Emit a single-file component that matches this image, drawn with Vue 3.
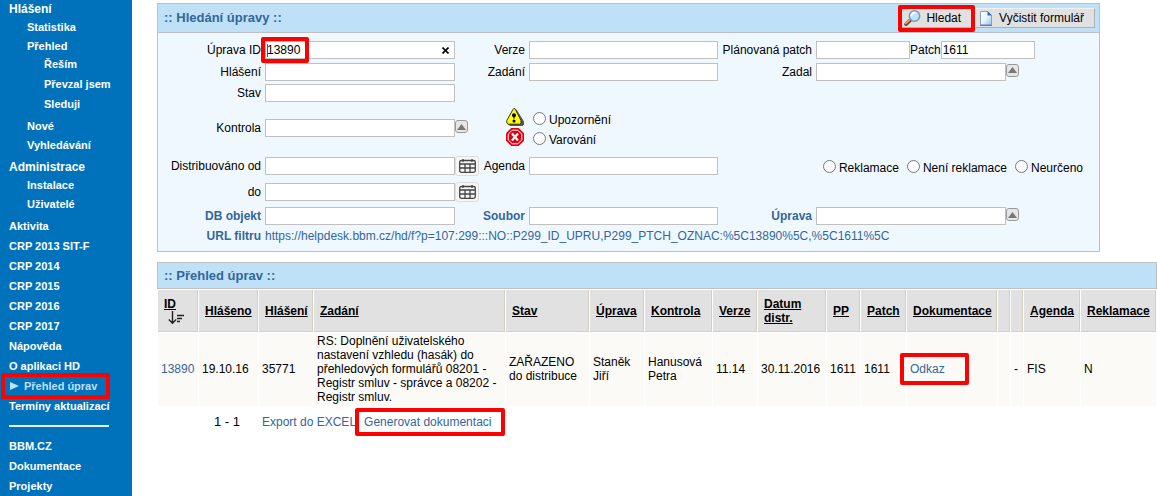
<script setup>
import { ref } from 'vue'

const menu = [
  {
    label: 'Hlášení',
    items: [
      { label: 'Statistika' },
      { label: 'Přehled', items: ['Řeším', 'Převzal jsem', 'Sleduji'] },
      { label: 'Nové' },
      { label: 'Vyhledávání' },
    ],
  },
  { label: 'Administrace', items: [{ label: 'Instalace' }, { label: 'Uživatelé' }] },
]
const pages = ['Aktivita', 'CRP 2013 SIT-F', 'CRP 2014', 'CRP 2015', 'CRP 2016', 'CRP 2017', 'Nápověda', 'O aplikaci HD', 'Přehled úprav', 'Termíny aktualizací']
const current = 'Přehled úprav'
const external = ['BBM.CZ', 'Dokumentace', 'Projekty']

const upravaId = ref('13890')
const patch = ref('1611')
const kontrola = ref('')
const reklamace = ref('')

const columns = [
  { key: 'id', label: 'ID' },
  { key: 'hlaseno', label: 'Hlášeno' },
  { key: 'hlaseni', label: 'Hlášení' },
  { key: 'zadani', label: 'Zadání' },
  { key: 'stav', label: 'Stav' },
  { key: 'uprava', label: 'Úprava' },
  { key: 'kontrola', label: 'Kontrola' },
  { key: 'verze', label: 'Verze' },
  { key: 'datum', label: 'Datum distr.' },
  { key: 'pp', label: 'PP' },
  { key: 'patch', label: 'Patch' },
  { key: 'dokumentace', label: 'Dokumentace' },
  { key: 'e1', label: '' },
  { key: 'e2', label: '' },
  { key: 'agenda', label: 'Agenda' },
  { key: 'reklamace', label: 'Reklamace' },
]
const rows = [
  {
    id: '13890', hlaseno: '19.10.16', hlaseni: '35771',
    zadani: 'RS: Doplnění uživatelského nastavení vzhledu (hasák) do přehledových formulářů 08201 - Registr smluv - správce a 08202 - Registr smluv.',
    stav: 'ZAŘAZENO do distribuce', uprava: 'Staněk Jiří', kontrola: 'Hanusová Petra', verze: '11.14',
    datum: '30.11.2016', pp: '1611', patch: '1611', dokumentace: 'Odkaz', e1: '', e2: '-', agenda: 'FIS', reklamace: 'N',
  },
]
</script>

<template>
  <div class="page">
    <nav class="side">
      <template v-for="group in menu" :key="group.label">
        <a class="head" href="#">{{ group.label }}</a>
        <ul class="l2">
          <li v-for="item in group.items" :key="item.label">
            <a href="#">{{ item.label }}</a>
            <ul v-if="item.items" class="l3">
              <li v-for="sub in item.items" :key="sub"><a href="#">{{ sub }}</a></li>
            </ul>
          </li>
        </ul>
      </template>
      <ul class="flat">
        <li v-for="p in pages" :key="p" :class="{ current: p === current }">
          <a href="#"><svg v-if="p === current" class="arrow" width="10" height="8" viewBox="0 0 10 8"><path d="M1 0L10 4L1 8Z" fill="currentColor" /></svg>{{ p }}</a>
          <span v-if="p === current" class="mark mark-menu"></span>
        </li>
      </ul>
      <hr>
      <ul class="flat">
        <li v-for="p in external" :key="p"><a href="#">{{ p }}</a></li>
      </ul>
    </nav>

    <main>
      <form class="panel" @submit.prevent>
        <header class="bar">
          <h2>:: Hledání úpravy ::</h2>
          <div class="actions">
            <div class="rel">
              <button type="submit" class="btn find">
                <svg width="17" height="16" viewBox="0 0 17 16">
                  <path d="M2 14.2L6 10.4" stroke="#6b4a3a" stroke-width="3.6" stroke-linecap="round" />
                  <path d="M1.8 13.4L5.4 10" stroke="#f0a050" stroke-width="1.8" stroke-linecap="round" />
                  <circle cx="10.5" cy="6" r="5.2" fill="#b5e6fb" stroke="#7d93b5" stroke-width="1.5" />
                  <path d="M7.3 6.4a3.3 3.3 0 0 1 4.2-3.5" stroke="#fff" stroke-width="1.8" fill="none" />
                </svg>
                Hledat
              </button>
              <span class="mark mark-find"></span>
            </div>
            <button type="reset" class="btn clear">
              <svg width="16" height="16" viewBox="0 0 16 16">
                <defs>
                  <linearGradient id="sheet" x1="0" y1="0" x2="1" y2="1">
                    <stop offset="0" stop-color="#fff" /><stop offset=".5" stop-color="#eaf4fd" /><stop offset="1" stop-color="#8fc3ee" />
                  </linearGradient>
                </defs>
                <path d="M2.5 1.5H9.5L13.5 5.5V15H2.5Z" fill="url(#sheet)" stroke="#7fa3cc" />
                <path d="M9.5 1L14 5.5H9.5Z" fill="#2d66b8" />
                <path d="M2 15.3H14" stroke="#3f73b5" />
              </svg>
              Vyčistit formulář
            </button>
          </div>
        </header>

        <div class="fields">
          <label for="uid">Úprava ID</label>
          <div class="cell rel">
            <input id="uid" v-model="upravaId" type="text">
            <span class="caret"></span>
            <button type="button" class="erase" aria-label="Vymazat" @click="upravaId = ''">
              <svg width="7" height="7" viewBox="0 0 7 7"><path d="M.5 .5L6.5 6.5M6.5 .5L.5 6.5" stroke="#000" stroke-width="1.6" /></svg>
            </button>
            <span class="mark mark-id"></span>
          </div>
          <label for="verze">Verze</label>
          <div class="cell"><input id="verze" type="text"></div>
          <label for="pp">Plánovaná patch</label>
          <div class="cell">
            <input id="pp" class="short" type="text"><label for="patch" class="tight">Patch</label><input id="patch" v-model="patch" class="short" type="text">
          </div>

          <label for="hlaseni">Hlášení</label>
          <div class="cell"><input id="hlaseni" type="text"></div>
          <label for="zadani">Zadání</label>
          <div class="cell"><input id="zadani" type="text"></div>
          <label for="zadal">Zadal</label>
          <div class="cell">
            <input id="zadal" type="text"><button type="button" class="lov" aria-label="Vybrat"><svg width="9" height="6" viewBox="0 0 9 6"><path d="M4.5 0L9 6H0Z" fill="#777" /></svg></button>
          </div>

          <label for="stav">Stav</label>
          <div class="cell wide"><input id="stav" type="text"></div>

          <label for="kontrola">Kontrola</label>
          <div class="cell">
            <input id="kontrola" type="text"><button type="button" class="lov" aria-label="Vybrat"><svg width="9" height="6" viewBox="0 0 9 6"><path d="M4.5 0L9 6H0Z" fill="#777" /></svg></button>
          </div>
          <div class="levels">
            <svg width="18" height="18" viewBox="0 0 18 18">
              <path d="M10.5 1.5L18 13.5V16.5L16.5 18H4L2 16Z" fill="#555" />
              <path d="M7.6 .7H9L15 12.5V15L13.8 16.2H2L.8 15V12.5L6.8 1.7Z" fill="#ff0" stroke="#333" stroke-width="1" />
              <circle cx="8" cy="7.2" r="2" fill="#000" />
              <path d="M7.4 7H8.6V10.6H7.4Z" fill="#000" />
              <circle cx="8" cy="12.9" r="1.5" fill="#000" />
            </svg>
            <label class="radio"><input v-model="kontrola" type="radio" name="kontrola" value="U"><span>Upozornění</span></label>
            <svg width="18" height="18" viewBox="0 0 18 18">
              <path d="M5.3 0H12.7L18 5.3V12.7L12.7 18H5.3L0 12.7V5.3Z" fill="#e3000f" />
              <path d="M6.2 2.2H11.8L15.8 6.2V11.8L11.8 15.8H6.2L2.2 11.8V6.2Z" fill="none" stroke="#fff" />
              <path d="M6 5.5L12 12.5M12 5.5L6 12.5" stroke="#fff" stroke-width="2.2" />
            </svg>
            <label class="radio"><input v-model="kontrola" type="radio" name="kontrola" value="V"><span>Varování</span></label>
          </div>

          <label for="od">Distribuováno od</label>
          <div class="cell">
            <input id="od" type="text"><button type="button" class="cal" aria-label="Kalendář"><svg width="17" height="14" viewBox="0 0 17 14"><path d="M2.5 1.5H14.5Q16.3 1.5 16.3 3V11.5Q16.3 13.3 14.5 13.3H2.5Q.7 13.3 .7 11.5V3Q.7 1.5 2.5 1.5ZM.7 5H16.3M.7 9H16.3M6 5V13M11 5V13M4 0V3M13 0V3" fill="none" stroke="#444" stroke-width="1.3" /></svg></button>
          </div>
          <label for="agenda">Agenda</label>
          <div class="cell"><input id="agenda" type="text"></div>
          <div class="claims">
            <label class="radio"><input v-model="reklamace" type="radio" name="reklamace" value="A"><span>Reklamace</span></label>
            <label class="radio"><input v-model="reklamace" type="radio" name="reklamace" value="N"><span>Není reklamace</span></label>
            <label class="radio"><input v-model="reklamace" type="radio" name="reklamace" value="X"><span>Neurčeno</span></label>
          </div>

          <label for="do">do</label>
          <div class="cell wide">
            <input id="do" type="text"><button type="button" class="cal" aria-label="Kalendář"><svg width="17" height="14" viewBox="0 0 17 14"><path d="M2.5 1.5H14.5Q16.3 1.5 16.3 3V11.5Q16.3 13.3 14.5 13.3H2.5Q.7 13.3 .7 11.5V3Q.7 1.5 2.5 1.5ZM.7 5H16.3M.7 9H16.3M6 5V13M11 5V13M4 0V3M13 0V3" fill="none" stroke="#444" stroke-width="1.3" /></svg></button>
          </div>

          <label for="db" class="strong">DB objekt</label>
          <div class="cell"><input id="db" type="text"></div>
          <label for="soubor" class="strong">Soubor</label>
          <div class="cell"><input id="soubor" type="text"></div>
          <label for="uprava" class="strong">Úprava</label>
          <div class="cell">
            <input id="uprava" type="text"><button type="button" class="lov" aria-label="Vybrat"><svg width="9" height="6" viewBox="0 0 9 6"><path d="M4.5 0L9 6H0Z" fill="#777" /></svg></button>
          </div>

          <span class="caption strong">URL filtru</span>
          <div class="cell wide"><a href="#">https://helpdesk.bbm.cz/hd/f?p=107:299:::NO::P299_ID_UPRU,P299_PTCH_OZNAC:%5C13890%5C,%5C1611%5C</a></div>
        </div>
      </form>

      <section class="report">
        <header class="bar framed"><h2>:: Přehled úprav ::</h2></header>
        <table>
          <colgroup><col v-for="c in columns" :key="c.key" :class="'c-' + c.key"></colgroup>
          <thead>
            <tr>
              <th v-for="c in columns" :key="c.key" scope="col">
                <a v-if="c.label" href="#">{{ c.label }}</a>
                <svg v-if="c.key === 'id'" class="sort" width="16" height="14" viewBox="0 0 16 14"><path d="M4.5 0V12M.8 8.5L4.5 12.3L8.2 8.5M9 4.5H16M9 7.5H14M9 10.5H12" fill="none" stroke="#222" stroke-width="1.4" /></svg>
              </th>
            </tr>
          </thead>
          <tbody>
            <tr v-for="r in rows" :key="r.id">
              <td v-for="c in columns" :key="c.key">
                <a v-if="c.key === 'id'" href="#">{{ r.id }}</a>
                <span v-else-if="c.key === 'dokumentace'" class="rel"><a href="#">{{ r.dokumentace }}</a><span class="mark mark-doc"></span></span>
                <template v-else>{{ r[c.key] }}</template>
              </td>
            </tr>
          </tbody>
        </table>
        <footer>
          <span class="range">1 - 1</span>
          <a href="#">Export do EXCEL</a>
          <span class="rel gen"><a href="#">Generovat dokumentaci</a><span class="mark mark-gen"></span></span>
        </footer>
      </section>
    </main>
  </div>
</template>

<style>
body { margin: 0; background: #fff; }
</style>

<style scoped>
* { box-sizing: border-box; }
.page {
  display: flex;
  min-height: 100vh;
  font: 12px/14px "Liberation Sans", Arial, sans-serif;
  color: #000;
}
a { color: #336699; text-decoration: none; }
svg { display: block; flex: none; }
.rel { position: relative; }

.side {
  flex: 0 0 132px;
  padding-left: 9px;
  background: #0072bc;
  font-size: 11px;
  line-height: 18px;
  font-weight: bold;
}
.side a { color: #fff; display: block; white-space: nowrap; }
.side .head { font-size: 12px; }
.side ul { list-style: none; margin: 0; padding: 0; display: flex; flex-direction: column; }
.side .l2 { gap: 1px; padding: 0 0 4px 18px; }
.side .l3 { gap: 2px; padding: 0 0 3px 17px; }
.side .flat { gap: 2px; }
.side .current { position: relative; }
.side .current a { display: flex; align-items: center; gap: 5px; color: #bee1f8; }
.side hr { width: 100px; height: 2px; margin: 10px 0; border: 0; background: #e8f1f8; }

main { flex: 1; min-width: 0; padding: 3px 0 0 25px; }
.panel { margin: 0 57px 10px 0; border: 1px solid #c0c0c0; background: #f0f8ff; }
.bar {
  display: flex;
  align-items: center;
  justify-content: space-between;
  height: 29px;
  padding: 0 4px 0 6px;
  background: #bee1f8;
  border-bottom: 1px solid #c0c0c0;
}
.bar.framed { height: 27px; border: 1px solid #c0c0c0; }
h2 { margin: 0; font-size: 13px; line-height: 16px; color: #336699; }
.actions { display: flex; gap: 2px; }
.btn {
  display: flex;
  align-items: center;
  height: 20px;
  margin: 0;
  padding: 0;
  border: 1px solid;
  border-color: #f0f0f0 #b0b0b0 #b0b0b0 #f0f0f0;
  background: #e1e1e1;
  font: inherit;
  color: #000;
  white-space: nowrap;
}
.find { gap: 5px; padding: 0 11px 0 3px; }
.clear { gap: 5px; padding: 0 10px 0 2px; }

.fields {
  display: grid;
  grid-template-columns: 107px 216px 48px 189px 98px 1fr;
  grid-template-rows: 22px 21px 22px 48px 28px 24px 24px 16px;
  align-items: center;
  padding: 6px 0 7px;
}
.fields > label, .caption { padding-right: 4px; text-align: right; white-space: nowrap; justify-self: end; }
.strong { font-weight: bold; color: #336699; }
.cell { display: flex; align-items: center; }
.cell.wide { grid-column: 2 / -1; white-space: nowrap; }
.cell input {
  width: 190px;
  height: 18px;
  margin: 0;
  padding: 0 1px;
  border: 1px solid #c0c0c0;
  background: #fff;
  font: inherit;
}
.cell input.short { width: 94px; }
.tight { white-space: nowrap; }
.caret { position: absolute; left: 2px; top: 3px; width: 1px; height: 13px; background: #555; }
.erase { position: absolute; left: 177px; top: 6px; padding: 0; border: 0; background: none; }
.lov {
  display: grid;
  place-items: center;
  width: 13px;
  height: 13px;
  padding: 0;
  margin-bottom: 3px;
  border: 1px solid #999;
  border-radius: 3px;
  background: #e6e6e6;
}
.cal {
  display: grid;
  place-items: center;
  width: 24px;
  height: 20px;
  padding: 0;
  border: 1px solid #ddd;
  border-radius: 3px;
  background: #f6f6f6;
}
.levels { grid-column: 3 / -1; display: grid; grid-template-columns: 18px auto; justify-content: start; align-items: center; column-gap: 9px; padding-left: 25px; }
.levels svg { margin-bottom: 2px; }
.radio { display: flex; align-items: center; gap: 3px; white-space: nowrap; }
.radio input { width: 13px; height: 13px; margin: 0; }
.radio span { padding-top: 4px; }
.claims { grid-column: 5 / -1; display: flex; justify-content: end; gap: 8px; padding-right: 16px; }

table { width: 100%; table-layout: fixed; border-collapse: separate; border-spacing: 1px; }
th, td { text-align: left; vertical-align: middle; line-height: 14px; }
th { height: 42px; padding: 0 0 0 6px; background: #e1e1e1; border: 1px solid #d4d0c0; border-width: 0 1px 1px 0; }
th a { color: #000; text-decoration: underline; }
td { height: 73px; padding: 0 0 2px 3px; background: #fbfaf7; }
.sort { margin-left: 4px; }
.c-id { width: 40px; }
.c-hlaseno { width: 59px; }
.c-hlaseni { width: 54px; }
.c-stav { width: 83px; }
.c-uprava { width: 54px; }
.c-kontrola { width: 67px; }
.c-verze { width: 44px; }
.c-datum { width: 68px; }
.c-pp { width: 33px; }
.c-patch { width: 45px; }
.c-dokumentace { width: 90px; }
.c-e1, .c-e2 { width: 12px; }
.c-agenda { width: 56px; }
.c-reklamace { width: 75px; }

footer { display: flex; align-items: center; height: 30px; padding-left: 57px; white-space: nowrap; }
.range { width: 48px; font-size: 13px; }
.gen { margin-left: 8px; }

.mark { position: absolute; border: 4px solid #f00; border-radius: 2px; pointer-events: none; }
.mark-menu { left: -8px; top: -4px; width: 109px; height: 26px; }
.mark-find { left: -2px; top: -3px; right: -2px; bottom: -4px; }
.mark-id { left: -4px; top: -4px; width: 48px; height: 26px; }
.mark-doc { left: -10px; top: -9px; width: 69px; height: 32px; }
.mark-gen { left: -9px; top: -7px; right: -14px; bottom: -7px; }
</style>
